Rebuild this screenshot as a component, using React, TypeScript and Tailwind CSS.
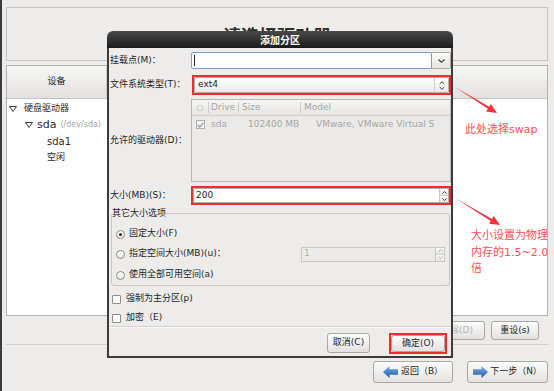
import React from "react";

const Btn: React.FC<{ className?: string; children: React.ReactNode }> = ({ className = "", children }) => (
  <div
    className={
      "flex items-center justify-center rounded-[3px] border border-[#a9a8a6] bg-linear-to-b from-[#fcfcfb] to-[#e3e2e0] text-[9px] text-[#262626] " +
      className
    }
  >
    {children}
  </div>
);

const Radio: React.FC<{ on?: boolean }> = ({ on }) => (
  <div className="flex h-[9px] w-[9px] items-center justify-center rounded-full border border-[#8d8c8a] bg-linear-to-b from-[#ffffff] to-[#e9e8e6]">
    {on && <div className="h-[3px] w-[3px] rounded-full bg-[#2c2c2c]" />}
  </div>
);

const Check: React.FC = () => <div className="h-[9px] w-[9px] rounded-[1px] border border-[#8d8c8a] bg-white" />;

const Expander: React.FC = () => (
  <svg width="8" height="6" viewBox="0 0 8 6">
    <path d="M0.5 0.5 H7.5 L4 5.5 Z" fill="#fff" stroke="#3a3a3a" strokeWidth="1" strokeLinejoin="round" />
  </svg>
);

const NavArrow: React.FC<{ dir: "l" | "r" }> = ({ dir }) => (
  <svg width="15" height="12" viewBox="0 0 15 12">
    <defs>
      <linearGradient id={"na" + dir} x1="0" y1="0" x2="0" y2="1">
        <stop offset="0" stopColor="#7ab2ee" />
        <stop offset="1" stopColor="#1c58a6" />
      </linearGradient>
    </defs>
    <path
      d={dir === "l" ? "M0 6 L6.5 0 V3.2 H15 V8.8 H6.5 V12 Z" : "M15 6 L8.5 0 V3.2 H0 V8.8 H8.5 V12 Z"}
      fill={"url(#na" + dir + ")"}
    />
  </svg>
);

const SpinArrows: React.FC<{ dim?: boolean }> = ({ dim }) => {
  const c = dim ? "#b4b4b4" : "#4a4a4a";
  return (
    <div className="flex h-full w-[9px] flex-col border-l border-[#c9c8c6]">
      <div className="flex flex-1 items-center justify-center border-b border-[#d2d1cf] bg-linear-to-b from-[#fafafa] to-[#e6e5e3]">
        <svg width="5" height="3" viewBox="0 0 5 3">
          <path d="M0.5 2.6 L2.5 0.5 L4.5 2.6" fill="none" stroke={c} strokeWidth="1" />
        </svg>
      </div>
      <div className="flex flex-1 items-center justify-center bg-linear-to-b from-[#fafafa] to-[#e6e5e3]">
        <svg width="5" height="3" viewBox="0 0 5 3">
          <path d="M0.5 0.4 L2.5 2.5 L4.5 0.4" fill="none" stroke={c} strokeWidth="1" />
        </svg>
      </div>
    </div>
  );
};

export default function App() {
  return (
    <div className="relative h-[391px] w-[554px] overflow-hidden border-l-2 border-[#3b3b3b] bg-[#edeceb] font-['DejaVu_Sans','Noto_Sans_CJK_SC',sans-serif] text-[#222]">
      {/* page behind the dialog */}
      <div className="flex flex-col pl-[4px] pr-[6px] pt-[7px]">
        <div className="flex h-[54px] justify-center border border-[#c6c5c3] bg-[#eeedec] pt-[19px]">
          <div className="text-[18px] font-bold leading-[20px] text-[#2e2e2e]">请选择驱动器</div>
        </div>

        <div className="mt-[4px] flex h-[251px] flex-col border border-[#b3b2b0] bg-white">
          <div className="flex h-[33px] shrink-0 border-b border-[#c4c3c1] bg-linear-to-b from-[#f7f7f6] to-[#e2e1df]">
            <div className="flex w-[100px] items-center justify-center border-r border-[#cfcecc] text-[9px] text-[#2a2a2a]">
              设备
            </div>
          </div>
          <div className="flex flex-col pt-[2px] text-[9px] text-[#2a2a2a]">
            <div className="flex h-[16px] items-center gap-[7px] pl-[2px]">
              <Expander />
              <span>硬盘驱动器</span>
            </div>
            <div className="flex h-[16px] items-center gap-[4px] pl-[18px]">
              <Expander />
              <span className="text-[11px]">sda</span>
              <span className="text-[8px] text-[#a5a5a5]">(/dev/sda)</span>
            </div>
            <div className="flex h-[17px] items-center pl-[40px] text-[10px]">sda1</div>
            <div className="flex h-[16px] items-center pl-[40px]">空闲</div>
          </div>
        </div>

        <div className="mt-[5px] flex justify-end gap-[6px] pr-[9px]">
          <Btn className="h-[19px] w-[56px] pr-[11px] text-[#b2b2b2]">
            <span className="ml-auto">删除(D)</span>
          </Btn>
          <Btn className="h-[19px] w-[48px]">重设(s)</Btn>
        </div>

        <div className="mt-[4px] border-t border-[#cfcecc]" />

        <div className="mt-[16px] flex justify-end gap-[14px]">
          <Btn className="h-[22px] w-[80px] gap-[3px]">
            <NavArrow dir="l" />
            <span>返回（B）</span>
          </Btn>
          <Btn className="h-[22px] w-[81px] gap-[2px] border-[#7d9fce]">
            <NavArrow dir="r" />
            <span>下一步（N）</span>
          </Btn>
        </div>
      </div>

      {/* dialog */}
      <div className="absolute left-[105px] top-[31px] w-[346px]">
        <div className="flex h-[17px] items-center justify-center rounded-t-[6px] bg-linear-to-b from-[#4b4b4b] to-[#1b1b1b] pt-[1px] text-[10px] font-bold text-white">
          添加分区
        </div>
        <div className="flex h-[310px] flex-col border-x-2 border-b-2 border-[#3c3c3c] bg-[#edeceb] pl-[1px] text-[9px] text-[#1e1e1e]">
          {/* mount point */}
          <div className="mt-[4px] flex h-[17px] items-center">
            <div className="w-[81px]">挂载点(M)：</div>
            <div className="flex h-full w-[260px]">
              <div className="flex flex-1 items-center rounded-l-[2px] border border-[#78a0d0] bg-white pl-[2px]">
                <div className="h-[11px] w-px bg-[#222]" />
              </div>
              <div className="flex w-[19px] items-center justify-center rounded-r-[2px] border border-l-0 border-[#a9a8a6] bg-linear-to-b from-[#fbfbfa] to-[#e4e3e1]">
                <svg width="7" height="4" viewBox="0 0 7 4">
                  <path d="M0.5 0.5 L3.5 3.3 L6.5 0.5" fill="none" stroke="#333" strokeWidth="1.1" />
                </svg>
              </div>
            </div>
          </div>

          {/* fs type */}
          <div className="mt-[6px] flex h-[20px] items-center">
            <div className="w-[82px]">文件系统类型(T)：</div>
            <div className="flex h-full w-[259px] border-2 border-[#ee2b2e]">
              <div className="flex flex-1 items-center rounded-[2px] border border-[#b2b1af] bg-linear-to-b from-[#fdfdfd] to-[#ecebea] pl-[3px]">
                <span className="flex-1">ext4</span>
                <div className="flex h-full w-[14px] items-center justify-center border-l border-[#cfcecc]">
                  <svg width="6" height="9" viewBox="0 0 6 9">
                    <path d="M0.6 3 L3 0.7 L5.4 3 M0.6 6 L3 8.3 L5.4 6" fill="none" stroke="#444" strokeWidth="1" />
                  </svg>
                </div>
              </div>
            </div>
          </div>

          {/* drives */}
          <div className="mt-[4px] flex h-[83px] items-center">
            <div className="w-[81px]">允许的驱动器(D)：</div>
            <div className="flex h-full w-[260px] flex-col border border-[#b9b8b6] bg-[#ebeae8] text-[#a6a6a6]">
              <div className="flex h-[16px] items-center border-b border-[#d2d1cf] bg-linear-to-b from-[#f6f6f5] to-[#e6e5e3]">
                <div className="flex h-[11px] w-[17px] items-center justify-center border-r border-[#cdccca] text-[8px]">○</div>
                <div className="flex h-[11px] w-[30px] items-center border-r border-[#cdccca] pl-[2px]">Drive</div>
                <div className="flex h-[11px] w-[62px] items-center border-r border-[#cdccca] pl-[3px]">Size</div>
                <div className="flex h-[11px] items-center pl-[3px]">Model</div>
              </div>
              <div className="flex h-[17px] items-center">
                <div className="flex w-[17px] justify-center">
                  <div className="flex h-[9px] w-[9px] items-center justify-center border border-[#b0b0b0] bg-[#f3f3f3]">
                    <svg width="7" height="6" viewBox="0 0 7 6">
                      <path d="M0.8 3 L2.7 5 L6.3 0.8" fill="none" stroke="#9a9a9a" strokeWidth="1.2" />
                    </svg>
                  </div>
                </div>
                <div className="w-[30px] pl-[2px]">sda</div>
                <div className="w-[62px] pl-[9px]">102400 MB</div>
                <div className="pl-[15px] whitespace-nowrap">VMware, VMware Virtual S</div>
              </div>
            </div>
          </div>

          {/* size */}
          <div className="mt-[4px] flex h-[19px] items-center">
            <div className="w-[81px]">大小(MB)(S)：</div>
            <div className="flex h-full w-[260px] border-2 border-[#ee2b2e]">
              <div className="flex flex-1 items-center border border-[#b2b1af] bg-white pl-[2px]">
                <span className="flex-1">200</span>
                <SpinArrows />
              </div>
            </div>
          </div>

          {/* other size options */}
          <fieldset className="ml-[1px] mt-[2px] w-[339px] rounded-[3px] border border-[#c8c7c5] pb-[1px]">
            <legend className="text-[9px] leading-[12px]">其它大小选项</legend>
            <div className="mt-[5px] flex h-[20px] items-center gap-[4px] pl-[4px]">
              <Radio on />
              <span>固定大小(F)</span>
            </div>
            <div className="flex h-[20px] items-center gap-[4px] pl-[4px] pr-[4px]">
              <Radio />
              <span>指定空间大小(MB)(u)：</span>
              <div className="ml-auto flex h-[15px] w-[144px] items-center border border-[#cac9c7] bg-[#ecebea] pl-[2px] text-[#b0b0b0]">
                <span className="flex-1">1</span>
                <SpinArrows dim />
              </div>
            </div>
            <div className="mt-[2px] flex h-[18px] items-center gap-[4px] pl-[4px]">
              <Radio />
              <span>使用全部可用空间(a)</span>
            </div>
          </fieldset>

          <div className="mt-[3px] flex h-[20px] items-center gap-[5px] pl-[2px]">
            <Check />
            <span>强制为主分区(p)</span>
          </div>
          <div className="mt-[2px] flex h-[14px] items-center gap-[5px] pl-[2px]">
            <Check />
            <span>加密（E)</span>
          </div>

          <div className="mt-[1px] border-t border-[#d3d2d0] border-b border-b-[#fafafa]" />

          <div className="mt-[5px] flex items-start justify-end gap-[19px] pr-[4px]">
            <Btn className="h-[20px] w-[43px]">取消(C)</Btn>
            <div className="border-2 border-[#ee2b2e]">
              <Btn className="h-[17px] w-[54px]">确定(O)</Btn>
            </div>
          </div>
        </div>
      </div>

      {/* annotations */}
      <svg className="pointer-events-none absolute left-0 top-0" width="554" height="391" viewBox="0 0 554 391">
        <polygon points="453,87 487.1,106.7 488.9,103.9 495,113 484.1,111.5 485.9,108.7" fill="#f5333a" />
        <polygon points="453,198 490,218.9 491.7,216 498,225 487.1,223.8 488.8,220.9" fill="#f5333a" />
      </svg>
      <div className="absolute left-[463px] top-[122px] text-[11px] leading-[15px] text-[#ff4e55]">此处选择swap</div>
      <div className="absolute left-[469px] top-[228px] text-[11px] leading-[16.5px] text-[#ff4e55]">
        <div>大小设置为物理</div>
        <div>内存的1.5~2.0</div>
        <div>倍</div>
      </div>
    </div>
  );
}
